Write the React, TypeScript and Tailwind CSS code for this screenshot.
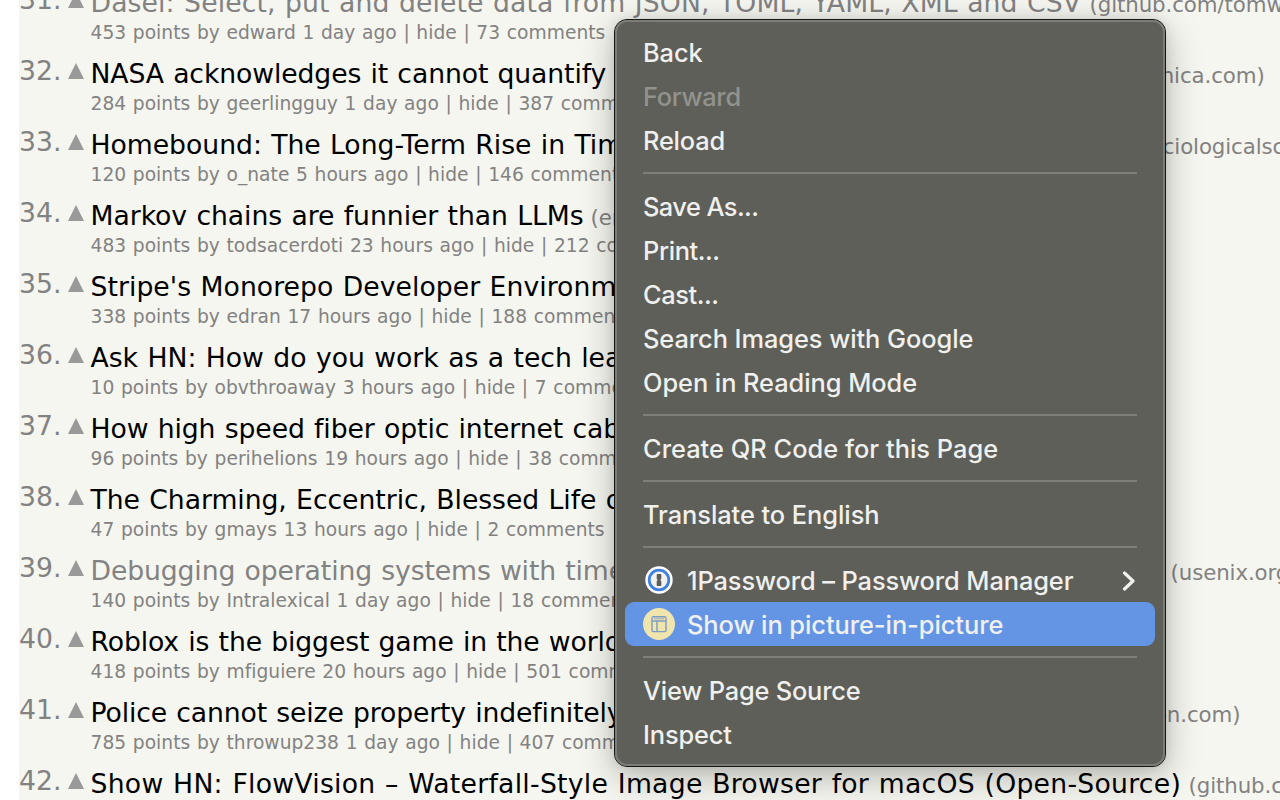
import type { ReactNode } from "react";

type Story = {
  rank: number;
  title: string;
  site?: string;
  meta: string;
  visited?: boolean;
  titleWidth?: string;
  tracking: string;
};

const stories: Story[] = [
  { rank: 31, title: "Dasel: Select, put and delete data from JSON, TOML, YAML, XML and CSV", site: "(github.com/tomwright)", meta: "453 points by edward 1 day ago | hide | 73 comments", visited: true, titleWidth: "w-[992px]", tracking: "tracking-[0.1px]" },
  { rank: 32, title: "NASA acknowledges it cannot quantify", site: "(arstechnica.com)", meta: "284 points by geerlingguy 1 day ago | hide | 387 comments", titleWidth: "w-[976px]", tracking: "tracking-[-0.11px]" },
  { rank: 33, title: "Homebound: The Long-Term Rise in Time", site: "(sociologicalscience.com)", meta: "120 points by o_nate 5 hours ago | hide | 146 comments", titleWidth: "w-[1033px]", tracking: "tracking-[-0.03px]" },
  { rank: 34, title: "Markov chains are funnier than LLMs", site: "(emnudge.dev)", meta: "483 points by todsacerdoti 23 hours ago | hide | 212 comments", titleWidth: "w-[493px]", tracking: "tracking-[-0.05px]" },
  { rank: 35, title: "Stripe's Monorepo Developer Environment", meta: "338 points by edran 17 hours ago | hide | 188 comments", tracking: "tracking-[0.04px]" },
  { rank: 36, title: "Ask HN: How do you work as a tech lead?", meta: "10 points by obvthroaway 3 hours ago | hide | 7 comments", tracking: "tracking-[0px]" },
  { rank: 37, title: "How high speed fiber optic internet cables", meta: "96 points by perihelions 19 hours ago | hide | 38 comments", tracking: "tracking-[-0.09px]" },
  { rank: 38, title: "The Charming, Eccentric, Blessed Life of", meta: "47 points by gmays 13 hours ago | hide | 2 comments", tracking: "tracking-[-0.05px]" },
  { rank: 39, title: "Debugging operating systems with time", site: "(usenix.org)", meta: "140 points by Intralexical 1 day ago | hide | 18 comments", visited: true, titleWidth: "w-[1073px]", tracking: "tracking-[-0.12px]" },
  { rank: 40, title: "Roblox is the biggest game in the world", meta: "418 points by mfiguiere 20 hours ago | hide | 501 comments", tracking: "tracking-[-0.12px]" },
  { rank: 41, title: "Police cannot seize property indefinitely", site: "(reason.com)", meta: "785 points by throwup238 1 day ago | hide | 407 comments", titleWidth: "w-[1003px]", tracking: "tracking-[-0.13px]" },
  { rank: 42, title: "Show HN: FlowVision – Waterfall-Style Image Browser for macOS (Open-Source)", site: "(github.com/netdcy)", meta: "102 points by netdcy 1 day ago | hide | 40 comments", titleWidth: "w-[1091px]", tracking: "tracking-[0.26px]" },
];

function StoryRow({ rank, title, site, meta, visited, titleWidth, tracking }: Story) {
  return (
    <div className="flex h-[71px] shrink-0 whitespace-nowrap">
      <div className="-mt-px w-[42px] shrink-0 text-right text-[26.67px] leading-[32px] text-[#828282]">{rank}.</div>
      <svg className="mt-[7px] ml-[7px] h-[16px] w-[16px] shrink-0" viewBox="0 0 16 16">
        <path d="M8 0 16 16H0Z" fill="#999" />
      </svg>
      <div className="ml-[6.5px]">
        <div className="flex h-[36px] items-baseline leading-[36px]">
          <span className={`shrink-0 text-[26.67px] [word-spacing:0.9px] ${tracking} ${titleWidth ?? ""} ${visited ? "text-[#828282]" : "text-black"}`}>
            {title}
          </span>
          {site && <span className="ml-[7px] text-[21.33px] text-[#828282] tracking-[-0.1px]">{site}</span>}
        </div>
        <div className="text-[18.67px] leading-[24px] tracking-[0.02px] text-[#828282] [word-spacing:0.7px]">{meta}</div>
      </div>
    </div>
  );
}

function MenuItem({ children, disabled, tracking }: { children: ReactNode; disabled?: boolean; tracking?: string }) {
  return (
    <div className={`flex h-[44px] items-center px-[18px] pt-[2px] ${tracking ?? "tracking-[-0.06px]"} ${disabled ? "text-[#92938d]" : "text-[#f0f0ef]"}`}>
      {children}
    </div>
  );
}

function Separator() {
  return (
    <div className="px-[18px] py-[10px]">
      <div className="h-[2px] bg-[#7e7f79]" />
    </div>
  );
}

function OnePasswordIcon() {
  return (
    <svg className="-mt-[2px] mr-[12px] h-8 w-8 shrink-0" viewBox="0 0 32 32">
      <circle cx="16" cy="16" r="13.7" fill="#fff" />
      <circle cx="16" cy="16" r="9.8" fill="#f1f1f0" stroke="#3f7fe0" strokeWidth="2.8" />
      <path d="M14.4 10h3.2q.7 0 .7.7v4.1l-1.1 1.1 1.1 1v4.4q0 .7-.7.7h-3.2q-.7 0-.7-.7v-4.2l1-1-1-1.1v-4.3q0-.7.7-.7Z" fill="#5d5d5b" />
    </svg>
  );
}

function LayoutIcon() {
  return (
    <svg className="-mt-[2px] mr-[12px] h-8 w-8 shrink-0" viewBox="0 0 32 32">
      <circle cx="16" cy="16" r="16" fill="#f1e5ae" />
      <g fill="none" stroke="#7d9cc6" strokeWidth="1.4">
        <rect x="9" y="8.8" width="14" height="14.8" rx="1.4" />
        <path d="M11 10.8h10" strokeWidth="0.8" />
        <path d="M9 13h14M14 13v10.5" />
      </g>
    </svg>
  );
}

function ContextMenu() {
  return (
    <div className="absolute top-[19px] left-[614px] h-[748px] w-[552px] rounded-[13px] border border-[#161715] bg-[#5e5f58] shadow-[0_10px_36px_rgba(0,0,0,0.26),0_0_12px_rgba(0,0,0,0.1)]">
      <div className="h-full rounded-[12px] border-2 border-[#7c7d77] px-[8px] pt-[8px] font-['Inter',sans-serif] text-[25.4px] font-medium whitespace-nowrap">
        <MenuItem>Back</MenuItem>
        <MenuItem disabled tracking="tracking-[-0.3px]">Forward</MenuItem>
        <MenuItem tracking="tracking-[-0.2px]">Reload</MenuItem>
        <Separator />
        <MenuItem tracking="tracking-[-0.55px]">Save As...</MenuItem>
        <MenuItem tracking="tracking-[-0.4px]">Print...</MenuItem>
        <MenuItem tracking="tracking-[-0.4px]">Cast...</MenuItem>
        <MenuItem>Search Images with Google</MenuItem>
        <MenuItem>Open in Reading Mode</MenuItem>
        <Separator />
        <MenuItem tracking="tracking-[0.02px]">Create QR Code for this Page</MenuItem>
        <Separator />
        <MenuItem>Translate to English</MenuItem>
        <Separator />
        <MenuItem tracking="tracking-[-0.1px]">
          <OnePasswordIcon />
          <span>1Password – Password Manager</span>
          <svg className="-mt-[1px] mr-[1px] ml-auto h-[20px] w-[14px]" viewBox="0 0 14 20" fill="none" stroke="currentColor" strokeWidth="3.2" strokeLinecap="round" strokeLinejoin="round">
            <path d="m2.5 2 8.5 8-8.5 8" />
          </svg>
        </MenuItem>
        <div className="rounded-[9px] bg-[#6495e4]">
          <MenuItem>
            <LayoutIcon />
            <span>Show in picture-in-picture</span>
          </MenuItem>
        </div>
        <Separator />
        <MenuItem tracking="tracking-[-0.2px]">View Page Source</MenuItem>
        <MenuItem tracking="tracking-[-0.15px]">Inspect</MenuItem>
      </div>
    </div>
  );
}

export default function App() {
  return (
    <div className="relative h-[800px] w-[1280px] overflow-hidden bg-white pl-[19px] font-['DejaVu_Sans',sans-serif]">
      <div className="flex h-full flex-col overflow-hidden bg-[#f6f6f0]">
        <div className="-mt-[15px] flex flex-col">
          {stories.map((story) => (
            <StoryRow key={story.rank} {...story} />
          ))}
        </div>
      </div>
      <ContextMenu />
    </div>
  );
}
